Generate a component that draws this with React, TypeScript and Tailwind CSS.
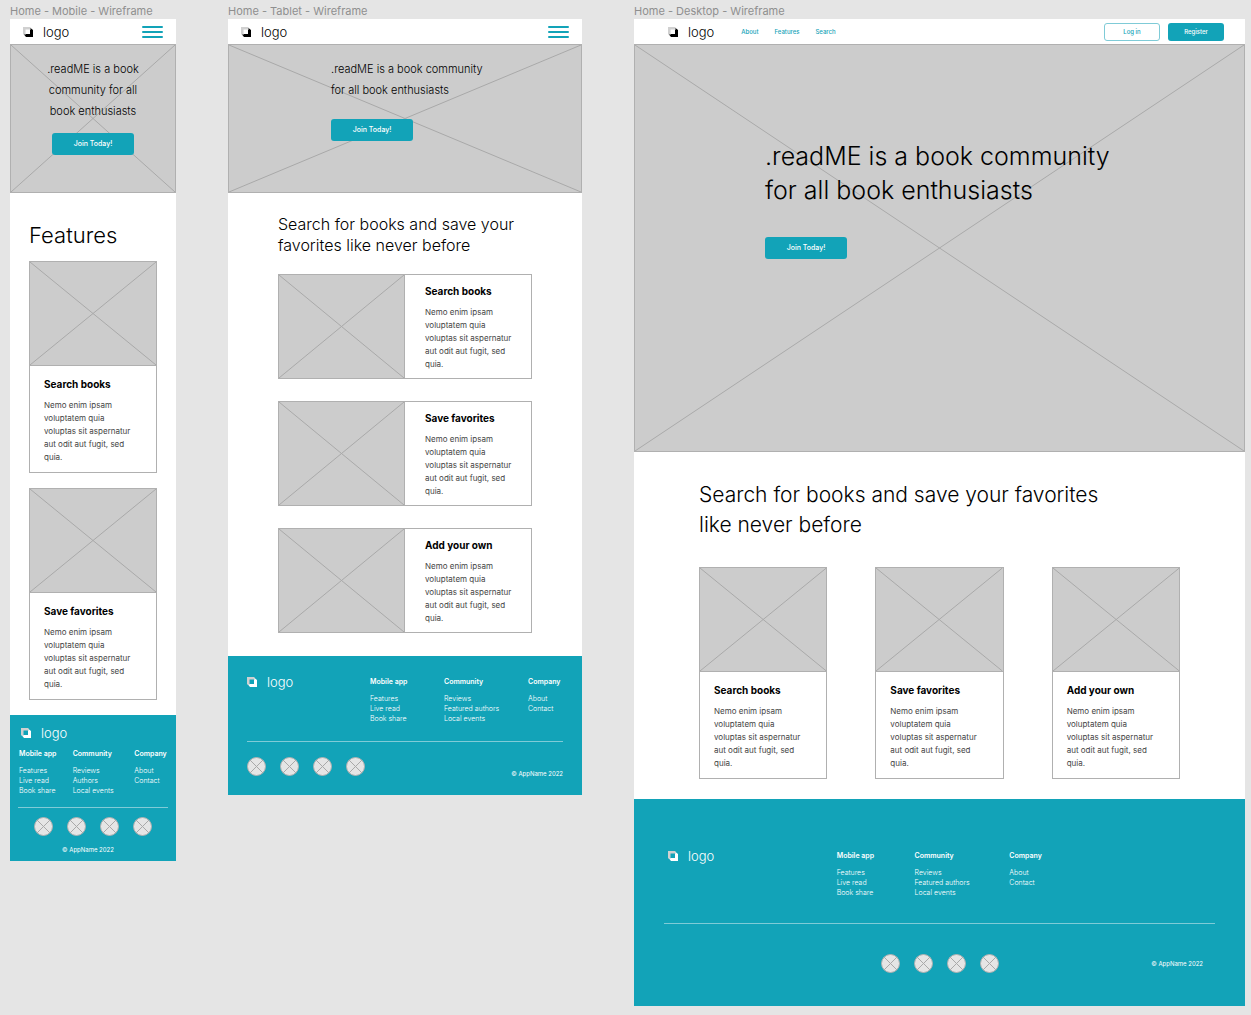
import type { ReactNode } from "react";

const features = ["Search books", "Save favorites", "Add your own"];

type Column = { title: string; links: string[] };

const columns = (second: string): Column[] => [
  { title: "Mobile app", links: ["Features", "Live read", "Book share"] },
  { title: "Community", links: ["Reviews", second, "Local events"] },
  { title: "Company", links: ["About", "Contact"] },
];

function Cross({ className = "" }: { className?: string }) {
  return (
    <svg
      className={className}
      viewBox="0 0 100 100"
      preserveAspectRatio="none"
      fill="none"
      stroke="#a9a9a9"
      aria-hidden="true"
    >
      <path d="M0 0L100 100M100 0L0 100" strokeWidth="1" vectorEffect="non-scaling-stroke" />
    </svg>
  );
}

function Frame({ name, children }: { name: string; children: ReactNode }) {
  return (
    <section className="min-w-0">
      <h2 className="h-[19px] whitespace-nowrap pt-[3px] text-[11px] leading-4 text-[#8f8f8f]">{name}</h2>
      <div className="bg-white">{children}</div>
    </section>
  );
}

function Logo({ light = false }: { light?: boolean }) {
  return (
    <a href="#home" className="flex items-center gap-2.5">
      <svg width="10" height="10" viewBox="0 0 10 10" aria-hidden="true">
        <path d="M7.500 1L10 3V10H3L1 7.500z" fill={light ? "#fff" : "#000"} />
        <path d="M0 0h7.500v3H3v4.500H0z" fill="#d0d0d0" />
        <path d="M2.500 2.500h4.500v4.500h-4.500z" fill={light ? "#12a3b8" : "#fff"} />
      </svg>
      <span className={light ? "text-[13px] font-light leading-4 text-white" : "text-[13px] font-light leading-4 text-black"}>
        logo
      </span>
    </a>
  );
}

function MenuButton() {
  return (
    <button type="button" aria-label="Open menu" className="flex flex-col gap-[3px] pt-px">
      <span className="h-0.5 w-[21px] rounded-full bg-[#12a3b8]" />
      <span className="h-0.5 w-[21px] rounded-full bg-[#12a3b8]" />
      <span className="h-0.5 w-[21px] rounded-full bg-[#12a3b8]" />
    </button>
  );
}

function CompactHeader() {
  return (
    <header className="flex h-[25px] items-center justify-between px-[13px]">
      <Logo />
      <MenuButton />
    </header>
  );
}

function Hero({ className, children }: { className: string; children: ReactNode }) {
  return (
    <div className="relative border border-[#b0b0b0] bg-[#ccc]">
      <Cross className="absolute inset-0 h-full w-full" />
      <div className={className}>{children}</div>
    </div>
  );
}

function JoinButton() {
  return (
    <button type="button" className="block h-[22px] w-[82px] rounded-[3px] bg-[#12a3b8] text-[7px] font-medium leading-3 text-white">
      Join Today!
    </button>
  );
}

function CardText({ title }: { title: string }) {
  return (
    <>
      <h3 className="whitespace-nowrap text-[10px] font-bold leading-4 text-black">{title}</h3>
      <p className="mt-[7px] max-w-[92px] text-[8px] leading-[13px] text-[#444]">
        Nemo enim ipsam voluptatem quia voluptas sit aspernatur aut odit aut fugit, sed quia.
      </p>
    </>
  );
}

function Card({ title }: { title: string }) {
  return (
    <article className="border border-[#b0b0b0]">
      <div className="border-b border-[#b0b0b0] bg-[#ccc]">
        <Cross className="block h-[103px] w-full" />
      </div>
      <div className="px-3.5 pb-2 pt-2.5">
        <CardText title={title} />
      </div>
    </article>
  );
}

function WideCard({ title }: { title: string }) {
  return (
    <article className="flex border border-[#b0b0b0]">
      <div className="w-1/2 border-r border-[#b0b0b0] bg-[#ccc]">
        <Cross className="block h-[103px] w-full" />
      </div>
      <div className="w-1/2 pl-5 pt-2">
        <CardText title={title} />
      </div>
    </article>
  );
}

function FooterColumn({ title, links }: Column) {
  return (
    <div className="whitespace-nowrap">
      <h3 className="text-[7px] font-semibold leading-[10px]">{title}</h3>
      <ul className="mt-[7px] text-[7px] font-light leading-[10px]">
        {links.map((link) => (
          <li key={link}>
            <a href="#footer">{link}</a>
          </li>
        ))}
      </ul>
    </div>
  );
}

function Socials() {
  return (
    <ul className="flex gap-3.5">
      {[1, 2, 3, 4].map((n) => (
        <li key={n}>
          <a
            href="#social"
            aria-label={`Social link ${n}`}
            className="flex h-[19px] w-[19px] items-center justify-center rounded-full border border-[#b0b0b0] bg-[#e5e5e5]"
          >
            <Cross className="h-[13px] w-[13px]" />
          </a>
        </li>
      ))}
    </ul>
  );
}

function Copyright() {
  return <p className="whitespace-nowrap text-[6px] leading-[10px]">© AppName 2022</p>;
}

function Mobile() {
  const [a, b, c] = columns("Authors");
  return (
    <Frame name="Home - Mobile - Wireframe">
      <CompactHeader />
      <Hero className="relative flex flex-col items-center pb-[37px] pt-3.5 text-center">
        <h1 className="text-[11px] font-light leading-[21px] text-black">
          .readME is a book
          <br />
          community for all
          <br />
          book enthusiasts
        </h1>
        <div className="mt-[11px]">
          <JoinButton />
        </div>
      </Hero>
      <main className="px-[19px] pb-[15px] pt-7">
        <h2 className="text-[22px] font-light leading-7 text-black">Features</h2>
        <div className="mt-3 flex flex-col gap-[15px]">
          {features.slice(0, 2).map((title) => (
            <Card key={title} title={title} />
          ))}
        </div>
      </main>
      <footer className="bg-[#12a3b8] px-2 pb-1.5 pt-2.5 text-white">
        <div className="pl-[3px]">
          <Logo light />
        </div>
        <div className="mt-2 grid grid-cols-[54fr_62fr_34fr] pl-px">
          <FooterColumn {...a} />
          <FooterColumn {...b} />
          <FooterColumn {...c} />
        </div>
        <hr className="mt-[11px] border-[#7fcbd7]" />
        <div className="mt-[9px] flex justify-center">
          <Socials />
        </div>
        <div className="mt-[9px] flex justify-center pr-2.5">
          <Copyright />
        </div>
      </footer>
    </Frame>
  );
}

function Tablet() {
  const [a, b, c] = columns("Featured authors");
  return (
    <Frame name="Home - Tablet - Wireframe">
      <CompactHeader />
      <Hero className="relative pb-[51px] pl-[29%] pt-3.5">
        <h1 className="text-[11px] font-light leading-[21px] text-black">
          .readME is a book community
          <br />
          for all book enthusiasts
        </h1>
        <div className="mt-[18px]">
          <JoinButton />
        </div>
      </Hero>
      <main className="px-[50px] pb-[23px] pt-[21px]">
        <h2 className="text-[16px] font-light leading-[21px] text-black">
          Search for books and save your
          <br />
          favorites like never before
        </h2>
        <div className="mt-[18px] flex flex-col gap-[22px]">
          {features.map((title) => (
            <WideCard key={title} title={title} />
          ))}
        </div>
      </main>
      <footer className="bg-[#12a3b8] px-[19px] pb-4 pt-[18px] text-white">
        <div className="grid grid-cols-[123fr_74fr_84fr_35fr]">
          <div>
            <Logo light />
          </div>
          <div className="pt-[3px]"><FooterColumn {...a} /></div>
          <div className="pt-[3px]"><FooterColumn {...b} /></div>
          <div className="pt-[3px]"><FooterColumn {...c} /></div>
        </div>
        <hr className="mt-[17px] border-[#7fcbd7]" />
        <div className="mt-[15px] flex items-end justify-between">
          <div className="pb-[3px]">
            <Socials />
          </div>
          <Copyright />
        </div>
      </footer>
    </Frame>
  );
}

function Desktop() {
  const [a, b, c] = columns("Featured authors");
  return (
    <Frame name="Home - Desktop - Wireframe">
      <header className="flex h-[25px] items-center pl-[34px] pr-[21px]">
        <Logo />
        <nav className="ml-[27px] flex gap-4 text-[6px] font-medium leading-[10px] text-[#12a3b8]">
          <a href="#about">About</a>
          <a href="#features">Features</a>
          <a href="#search">Search</a>
        </nav>
        <div className="ml-auto flex gap-2 text-[6px] font-medium leading-[10px]">
          <button type="button" className="h-[18px] w-14 rounded-[3px] border border-[#7fcbd7] text-[#12a3b8]">
            Log in
          </button>
          <button type="button" className="h-[18px] w-14 rounded-[3px] bg-[#12a3b8] text-white">
            Register
          </button>
        </div>
      </header>
      <Hero className="relative pb-[192px] pl-[130px] pt-[94px]">
        <h1 className="text-[25px] font-light leading-[34px] text-black">
          .readME is a book community
          <br />
          for all book enthusiasts
        </h1>
        <div className="mt-[30px]">
          <JoinButton />
        </div>
      </Hero>
      <main className="px-[65px] pb-5 pt-7">
        <h2 className="text-[21px] font-light leading-[30px] text-black">
          Search for books and save your favorites
          <br />
          like never before
        </h2>
        <div className="mt-[27px] grid grid-cols-3 gap-12">
          {features.map((title) => (
            <Card key={title} title={title} />
          ))}
        </div>
      </main>
      <footer className="bg-[#12a3b8] px-[30px] pb-[33px] pt-[49px] text-white">
        <div className="grid grid-cols-[173fr_78fr_95fr_206fr]">
          <div className="pl-1">
            <Logo light />
          </div>
          <div className="pt-[3px]"><FooterColumn {...a} /></div>
          <div className="pt-[3px]"><FooterColumn {...b} /></div>
          <div className="pt-[3px]"><FooterColumn {...c} /></div>
        </div>
        <hr className="mt-[25px] border-[#7fcbd7]" />
        <div className="mt-[30px] grid grid-cols-[1fr_auto_1fr] items-center">
          <div />
          <Socials />
          <div className="flex justify-end pr-3">
            <Copyright />
          </div>
        </div>
      </footer>
    </Frame>
  );
}

export default function App() {
  return (
    <div className="grid min-h-screen grid-cols-[166fr_354fr_611fr] items-start gap-x-13 bg-[#e5e5e5] pb-2 pl-2.5 pr-1.5 font-['Inter',sans-serif]">
      <Mobile />
      <Tablet />
      <Desktop />
    </div>
  );
}
